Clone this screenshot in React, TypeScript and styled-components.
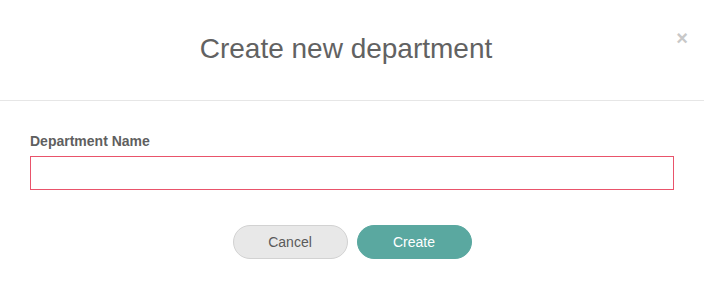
import React from "react";
import styled, { createGlobalStyle } from "styled-components";

const Global = createGlobalStyle`
  html, body { margin: 0; padding: 0; background: #fff; }
  body { font-family: "Liberation Sans", Arial, sans-serif; }
  * { box-sizing: border-box; }
`;

const Modal = styled.div`
  width: 704px;
  height: 289px;
  background: #fff;
  display: flex;
  flex-direction: column;
`;

const Header = styled.div`
  position: relative;
  height: 101px;
  padding-right: 12px;
  border-bottom: 1px solid #e6e6e6;
  display: flex;
  align-items: center;
  justify-content: center;
`;

const Title = styled.h2`
  margin: 0;
  padding-bottom: 2px;
  font-size: 28px;
  font-weight: 400;
  color: #626262;
`;

const Close = styled.button`
  position: absolute;
  top: 30px;
  right: 14px;
  width: 16px;
  height: 16px;
  padding: 0;
  border: none;
  background: none;
  color: #c8c8c8;
  font-size: 20px;
  font-weight: 700;
  line-height: 16px;
  cursor: pointer;
  font-family: "Liberation Sans", Arial, sans-serif;
`;

const Body = styled.div`
  padding: 32px 30px 0 30px;
  display: flex;
  flex-direction: column;
`;

const Label = styled.label`
  font-size: 14px;
  font-weight: 700;
  color: #5f5f5f;
  margin-bottom: 7px;
  line-height: 16px;
`;

const Input = styled.input`
  width: 644px;
  height: 34px;
  border: 1px solid #e9536b;
  border-radius: 0;
  outline: none;
  padding: 0 8px;
  font-size: 14px;
  font-family: inherit;
`;

const Actions = styled.div`
  display: flex;
  justify-content: center;
  gap: 9px;
  margin-top: 35px;
`;

const Button = styled.button<{ $primary?: boolean }>`
  width: 115px;
  height: 34px;
  border-radius: 17px;
  font-size: 14px;
  font-family: "Liberation Sans", Arial, sans-serif;
  cursor: pointer;
  background: ${(p) => (p.$primary ? "#5aa8a0" : "#e8e8e8")};
  color: ${(p) => (p.$primary ? "#ffffff" : "#5a5a5a")};
  border: 1px solid ${(p) => (p.$primary ? "#5aa8a0" : "#d2d2d2")};
`;

export default function App() {
  return (
    <>
      <Global />
      <Modal>
        <Header>
          <Title>Create new department</Title>
          <Close aria-label="Close">×</Close>
        </Header>
        <Body>
          <Label>Department Name</Label>
          <Input />
          <Actions>
            <Button>Cancel</Button>
            <Button $primary>Create</Button>
          </Actions>
        </Body>
      </Modal>
    </>
  );
}
